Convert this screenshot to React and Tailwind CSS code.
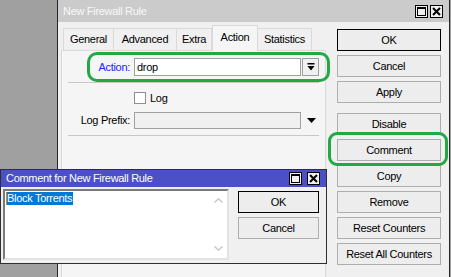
import React from "react";

// title bar buttons (maximize / close)
function TitleButtons({ gap }) {
  return (
    <div className={`ml-auto flex ${gap}`}>
      <div className="w-[13px] h-[13px] border border-black bg-[#f0f0f0] flex items-center justify-center">
        <svg width="9" height="9" viewBox="0 0 9 9">
          <rect x="0.5" y="0.5" width="8" height="8" fill="none" stroke="#000" />
          <rect x="0" y="0" width="9" height="2" fill="#000" />
        </svg>
      </div>
      <div className="w-[13px] h-[13px] border border-black bg-[#f0f0f0] flex items-center justify-center">
        <svg width="9" height="9" viewBox="0 0 9 9">
          <path d="M1 1 L8 8 M8 1 L1 8" stroke="#000" strokeWidth="2" />
        </svg>
      </div>
    </div>
  );
}

function Button({ children, primary, className = "" }) {
  return (
    <div
      className={`h-[22px] flex items-center justify-center bg-[#ededed] border text-black ${
        primary ? "border-black" : "border-[#adadad]"
      } ${className}`}
    >
      {children}
    </div>
  );
}

const tabs = [
  { name: "General", w: "w-[51px]" },
  { name: "Advanced", w: "w-[64px]" },
  { name: "Extra", w: "w-[36px]" },
  { name: "Action", w: "w-[46px]", active: true },
  { name: "Statistics", w: "w-[55px]" },
];

export default function App() {
  return (
    <div className="relative w-[451px] h-[277px] overflow-hidden bg-[#a0a0a0] font-['Liberation_Sans',Arial,sans-serif] text-[11px] tracking-[-0.3px] leading-none">
      {/* main window */}
      <div className="absolute left-[57px] top-0 w-[393px] h-[300px] bg-[#f0f0f0] border-x border-[#262626] flex flex-col">
        <div className="h-[22px] shrink-0 bg-[#cbcbcb] flex items-center pl-[5px] pr-[6px]">
          <span className="text-[#f8f8f8]">New Firewall Rule</span>
          <TitleButtons gap="gap-[2px]" />
        </div>

        <div className="flex pl-[3px] flex-1">
          {/* tab control */}
          <div className="w-[265px] flex flex-col">
            <div className="h-[28px] flex items-end pl-[2px]">
              {tabs.map((t) => (
                <div
                  key={t.name}
                  className={`${t.w} flex items-center justify-center border-t border-x border-[#d9d9d9] ${
                    t.active
                      ? "h-[26px] bg-[#f5f5f5] relative z-10 -mb-px pb-[3px]"
                      : "h-[22px] bg-[#f0f0f0] -ml-px first:ml-0"
                  }`}
                >
                  {t.name}
                </div>
              ))}
            </div>

            <div className="flex-1 border border-[#d9d9d9] bg-[#f5f5f5] pt-[7px] flex flex-col">
              <div className="flex items-center h-[18px]">
                <span className="w-[68px] text-right text-[#2020ff]">Action:</span>
                <div className="ml-[4px] w-[167px] h-[18px] bg-white border border-[#a0a0a0] flex items-center pl-[2px]">
                  drop
                </div>
                <div className="ml-px w-[17px] h-[18px] bg-[#f0f0f0] border border-[#a0a0a0] flex items-center justify-center">
                  <svg width="8" height="9" viewBox="0 0 8 9">
                    <rect x="0.5" y="0" width="7" height="1.5" fill="#000" />
                    <path d="M0.5 3 L7.5 3 L4 7.5 Z" fill="#000" />
                  </svg>
                </div>
              </div>

              <div className="mt-[6px] mx-[6px] h-px bg-[#c8c8c8]" />

              <div className="mt-[9px] flex items-center h-[12px] pl-[72px]">
                <div className="w-[12px] h-[12px] bg-white border border-[#8f8f8f]" />
                <span className="ml-[4px]">Log</span>
              </div>

              <div className="mt-[8px] flex items-center h-[17px]">
                <span className="w-[68px] text-right">Log Prefix:</span>
                <div className="ml-[4px] w-[167px] h-[17px] bg-[#f0f0f0] border border-[#a0a0a0]" />
                <svg className="ml-[6px]" width="9" height="5" viewBox="0 0 9 5">
                  <path d="M0 0 L9 0 L4.5 5 Z" fill="#000" />
                </svg>
              </div>

              <div className="mt-[6px] mx-[6px] h-px bg-[#c8c8c8]" />
            </div>
          </div>

          {/* right buttons */}
          <div className="ml-[11px] w-[104px] pt-[7px] flex flex-col gap-[4px]">
            <Button primary>OK</Button>
            <Button>Cancel</Button>
            <Button>Apply</Button>
            <Button className="mt-[6px]">Disable</Button>
            <Button>Comment</Button>
            <Button>Copy</Button>
            <Button>Remove</Button>
            <Button>Reset Counters</Button>
            <Button>Reset All Counters</Button>
          </div>
        </div>
      </div>

      {/* comment dialog */}
      <div className="absolute left-0 top-[169px] w-[327px] h-[95px] bg-[#f0f0f0] border border-[#2f2f2f] flex flex-col">
        <div className="h-[17px] shrink-0 bg-[#4c50c7] flex items-center pl-[5px] pr-[6px]">
          <span className="text-white">Comment for New Firewall Rule</span>
          <TitleButtons gap="gap-[5px]" />
        </div>
        <div className="flex pl-[2px] pt-[2px]">
          <div className="w-[226px] h-[71px] bg-white border-2 border-t-[#7a7a7a] border-l-[#7a7a7a] border-b-[#e3e3e3] border-r-[#e3e3e3] flex">
            <div className="flex-1 pt-[1px] pl-px">
              <span className="inline-flex items-center h-[13px] pr-px bg-[#0078d7] text-white border-l border-[#f07c14]">
                Block Torrents
              </span>
            </div>
            <div className="w-[17px] flex flex-col items-center justify-between py-[7px]">
              <svg width="9" height="5" viewBox="0 0 9 5">
                <path d="M0.5 4.5 L4.5 0.8 L8.5 4.5" fill="none" stroke="#c4c4c4" strokeWidth="1.3" />
              </svg>
              <svg width="9" height="5" viewBox="0 0 9 5">
                <path d="M0.5 0.5 L4.5 4.2 L8.5 0.5" fill="none" stroke="#c4c4c4" strokeWidth="1.3" />
              </svg>
            </div>
          </div>
          <div className="ml-[9px] w-[81px] pt-[2px] flex flex-col gap-[4px]">
            <Button primary>OK</Button>
            <Button>Cancel</Button>
          </div>
        </div>
      </div>

      {/* green highlight rings */}
      <div className="absolute left-[87px] top-[52px] w-[243px] h-[30px] border-[3px] border-[#22a844] rounded-[10px]" />
      <div className="absolute left-[328px] top-[132px] w-[120px] h-[34px] border-[3px] border-[#22a844] rounded-[9px]" />
    </div>
  );
}
